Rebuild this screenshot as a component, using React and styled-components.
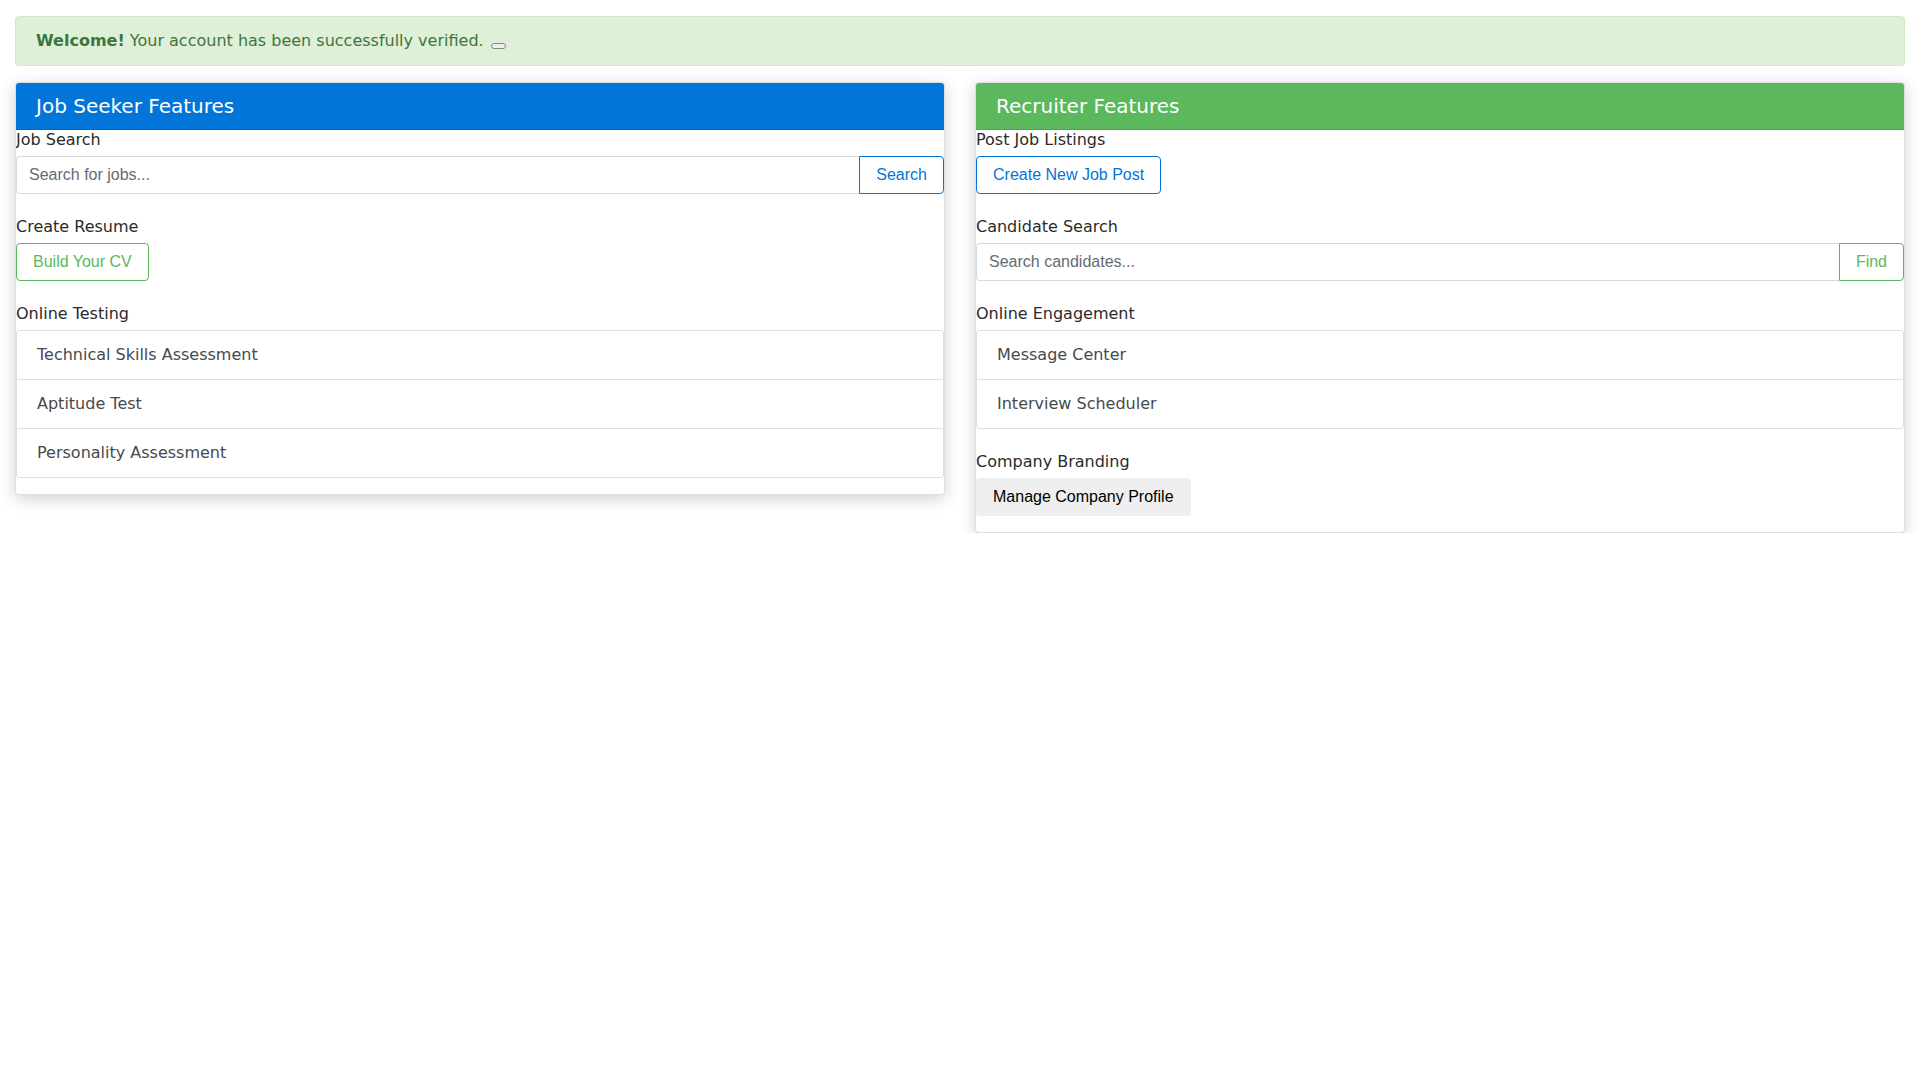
import React from 'react';
import styled, { createGlobalStyle, css } from 'styled-components';

const GlobalStyle = createGlobalStyle`
  html, body {
    margin: 0;
    padding: 0;
    background: #ffffff;
  }
  body {
    font-family: "DejaVu Sans", Verdana, sans-serif;
    font-size: 16px;
    line-height: 1.5;
    color: #292b2c;
  }
  * {
    box-sizing: border-box;
  }
`;

const colors = {
  primary: '#0275d8',
  success: '#5cb85c',
};

const Page = styled.div`
  padding: 16px 15px 0;
`;

const Alert = styled.div`
  margin-bottom: 16px;
  padding: 12px 20px;
  border: 1px solid #d0e9c6;
  border-radius: 4px;
  background: #dff0d8;
  color: #3c763d;
  line-height: 24px;

  strong {
    font-weight: 700;
  }
`;

const CloseButton = styled.button`
  display: inline-block;
  width: 15px;
  height: 6px;
  margin-left: 2px;
  padding: 0;
  vertical-align: -2px;
  border: 1px solid #858585;
  border-radius: 3px;
  background: #efefef;
`;

const Row = styled.div`
  display: grid;
  grid-template-columns: 1fr 1fr;
  column-gap: 30px;
  align-items: start;
`;

const Card = styled.div`
  display: flex;
  flex-direction: column;
  border: 1px solid rgba(0, 0, 0, 0.125);
  border-radius: 4px;
  background: #ffffff;
  box-shadow: 0 4px 16px rgba(0, 0, 0, 0.18);
  overflow: hidden;
`;

const CardHeader = styled.div`
  padding: 12px 20px;
  border-bottom: 1px solid rgba(0, 0, 0, 0.125);
  background: ${({ $tone }) => colors[$tone]};
  color: #ffffff;
  font-size: 20px;
  line-height: 22px;
  font-weight: 400;
`;

const CardBody = styled.div`
  display: flex;
  flex-direction: column;
  gap: 23px;
  padding-bottom: 16px;
`;

const Section = styled.div`
  display: flex;
  flex-direction: column;
  align-items: flex-start;
`;

const Label = styled.label`
  display: block;
  line-height: 19px;
  margin-bottom: 7px;
  color: #292b2c;
`;

const InputGroup = styled.div`
  display: flex;
  width: 100%;
`;

const Input = styled.input`
  flex: 1;
  min-width: 0;
  height: 38px;
  padding: 8px 12px;
  border: 1px solid rgba(0, 0, 0, 0.15);
  border-right: none;
  border-radius: 4px 0 0 4px;
  font-family: "Liberation Sans", Arial, sans-serif;
  font-size: 16px;
  color: #464a4c;
  background: #ffffff;
  outline: none;

  &::placeholder {
    color: #636c72;
  }
`;

const Button = styled.button`
  height: 38px;
  padding: 8px 16px;
  border: 1px solid transparent;
  border-radius: 4px;
  background: #efefef;
  color: #000000;
  font-family: "Liberation Sans", Arial, sans-serif;
  font-size: 16px;
  line-height: 20px;
  white-space: nowrap;
  cursor: pointer;

  ${({ $outline }) =>
    $outline &&
    css`
      background: transparent;
      border-color: ${colors[$outline]};
      color: ${colors[$outline]};
    `}

  ${({ $attached }) =>
    $attached &&
    css`
      border-radius: 0 4px 4px 0;
    `}
`;

const ListGroup = styled.div`
  display: flex;
  flex-direction: column;
  width: 100%;
`;

const ListItem = styled.div`
  padding: 12px 20px;
  margin-bottom: -1px;
  border: 1px solid rgba(0, 0, 0, 0.125);
  background: #ffffff;
  color: #464a4c;
  line-height: 24px;

  &:first-child {
    border-radius: 4px 4px 0 0;
  }
  &:last-child {
    margin-bottom: 0;
    border-radius: 0 0 4px 4px;
  }
`;

const SearchField = ({ placeholder, action, tone }) => (
  <InputGroup>
    <Input type="text" placeholder={placeholder} />
    <Button $outline={tone} $attached>
      {action}
    </Button>
  </InputGroup>
);

const List = ({ items }) => (
  <ListGroup>
    {items.map(item => (
      <ListItem key={item}>{item}</ListItem>
    ))}
  </ListGroup>
);

export default function App() {
  return (
    <Page>
      <GlobalStyle />
      <Alert>
        <strong>Welcome!</strong> Your account has been successfully verified.{' '}
        <CloseButton type="button" aria-label="Close" />
      </Alert>

      <Row>
        <Card>
          <CardHeader $tone="primary">Job Seeker Features</CardHeader>
          <CardBody>
            <Section>
              <Label>Job Search</Label>
              <SearchField placeholder="Search for jobs..." action="Search" tone="primary" />
            </Section>
            <Section>
              <Label>Create Resume</Label>
              <Button $outline="success">Build Your CV</Button>
            </Section>
            <Section>
              <Label>Online Testing</Label>
              <List items={['Technical Skills Assessment', 'Aptitude Test', 'Personality Assessment']} />
            </Section>
          </CardBody>
        </Card>

        <Card>
          <CardHeader $tone="success">Recruiter Features</CardHeader>
          <CardBody>
            <Section>
              <Label>Post Job Listings</Label>
              <Button $outline="primary">Create New Job Post</Button>
            </Section>
            <Section>
              <Label>Candidate Search</Label>
              <SearchField placeholder="Search candidates..." action="Find" tone="success" />
            </Section>
            <Section>
              <Label>Online Engagement</Label>
              <List items={['Message Center', 'Interview Scheduler']} />
            </Section>
            <Section>
              <Label>Company Branding</Label>
              <Button>Manage Company Profile</Button>
            </Section>
          </CardBody>
        </Card>
      </Row>
    </Page>
  );
}
